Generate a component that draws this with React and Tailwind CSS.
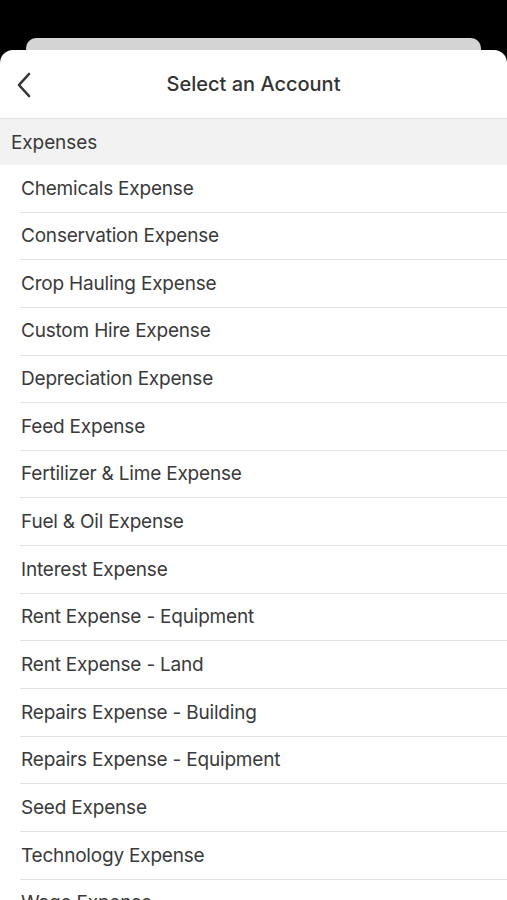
import React from "react";

const items = [
  "Chemicals Expense",
  "Conservation Expense",
  "Crop Hauling Expense",
  "Custom Hire Expense",
  "Depreciation Expense",
  "Feed Expense",
  "Fertilizer & Lime Expense",
  "Fuel & Oil Expense",
  "Interest Expense",
  "Rent Expense - Equipment",
  "Rent Expense - Land",
  "Repairs Expense - Building",
  "Repairs Expense - Equipment",
  "Seed Expense",
  "Technology Expense",
  "Wage Expense",
];

export default function App() {
  return (
    <div
      className="w-[507px] h-[900px] overflow-hidden bg-black flex flex-col"
      style={{ fontFamily: "Inter, 'Liberation Sans', sans-serif" }}
    >
      <div className="h-[38px] shrink-0" />
      <div className="mx-[26px] h-[12px] shrink-0 rounded-t-[10px] bg-[#d4d4d4]" />
      <div className="flex-1 bg-white rounded-t-[13px] flex flex-col">
        <div className="h-[69px] shrink-0 relative flex items-center justify-center border-b border-[#e3e3e3]">
          <svg
            className="absolute left-[15px] top-[22px]"
            width="18"
            height="26"
            viewBox="0 0 18 26"
            fill="none"
          >
            <path d="M14 2 L4 13 L14 24" stroke="#333" strokeWidth="2.6" strokeLinecap="round" strokeLinejoin="round" />
          </svg>
          <span className="text-[20px] font-medium text-[#333] tracking-[0px]">Select an Account</span>
        </div>
        <div className="h-[46px] shrink-0 bg-[#f2f2f2] flex items-center pl-[11px] pt-[2px] text-[19px] text-[#3a3a3a] tracking-[-0.1px]">
          Expenses
        </div>
        <div className="flex flex-col">
          {items.map((t) => (
            <div key={t} className="h-[47.65px] shrink-0 pl-[20px]">
              <div className="h-full border-b border-[#e2e2e2] flex items-center pl-[1px] pt-[1px] text-[19px] text-[#3a3a3a] tracking-[-0.2px]">
                {t}
              </div>
            </div>
          ))}
        </div>
      </div>
    </div>
  );
}
